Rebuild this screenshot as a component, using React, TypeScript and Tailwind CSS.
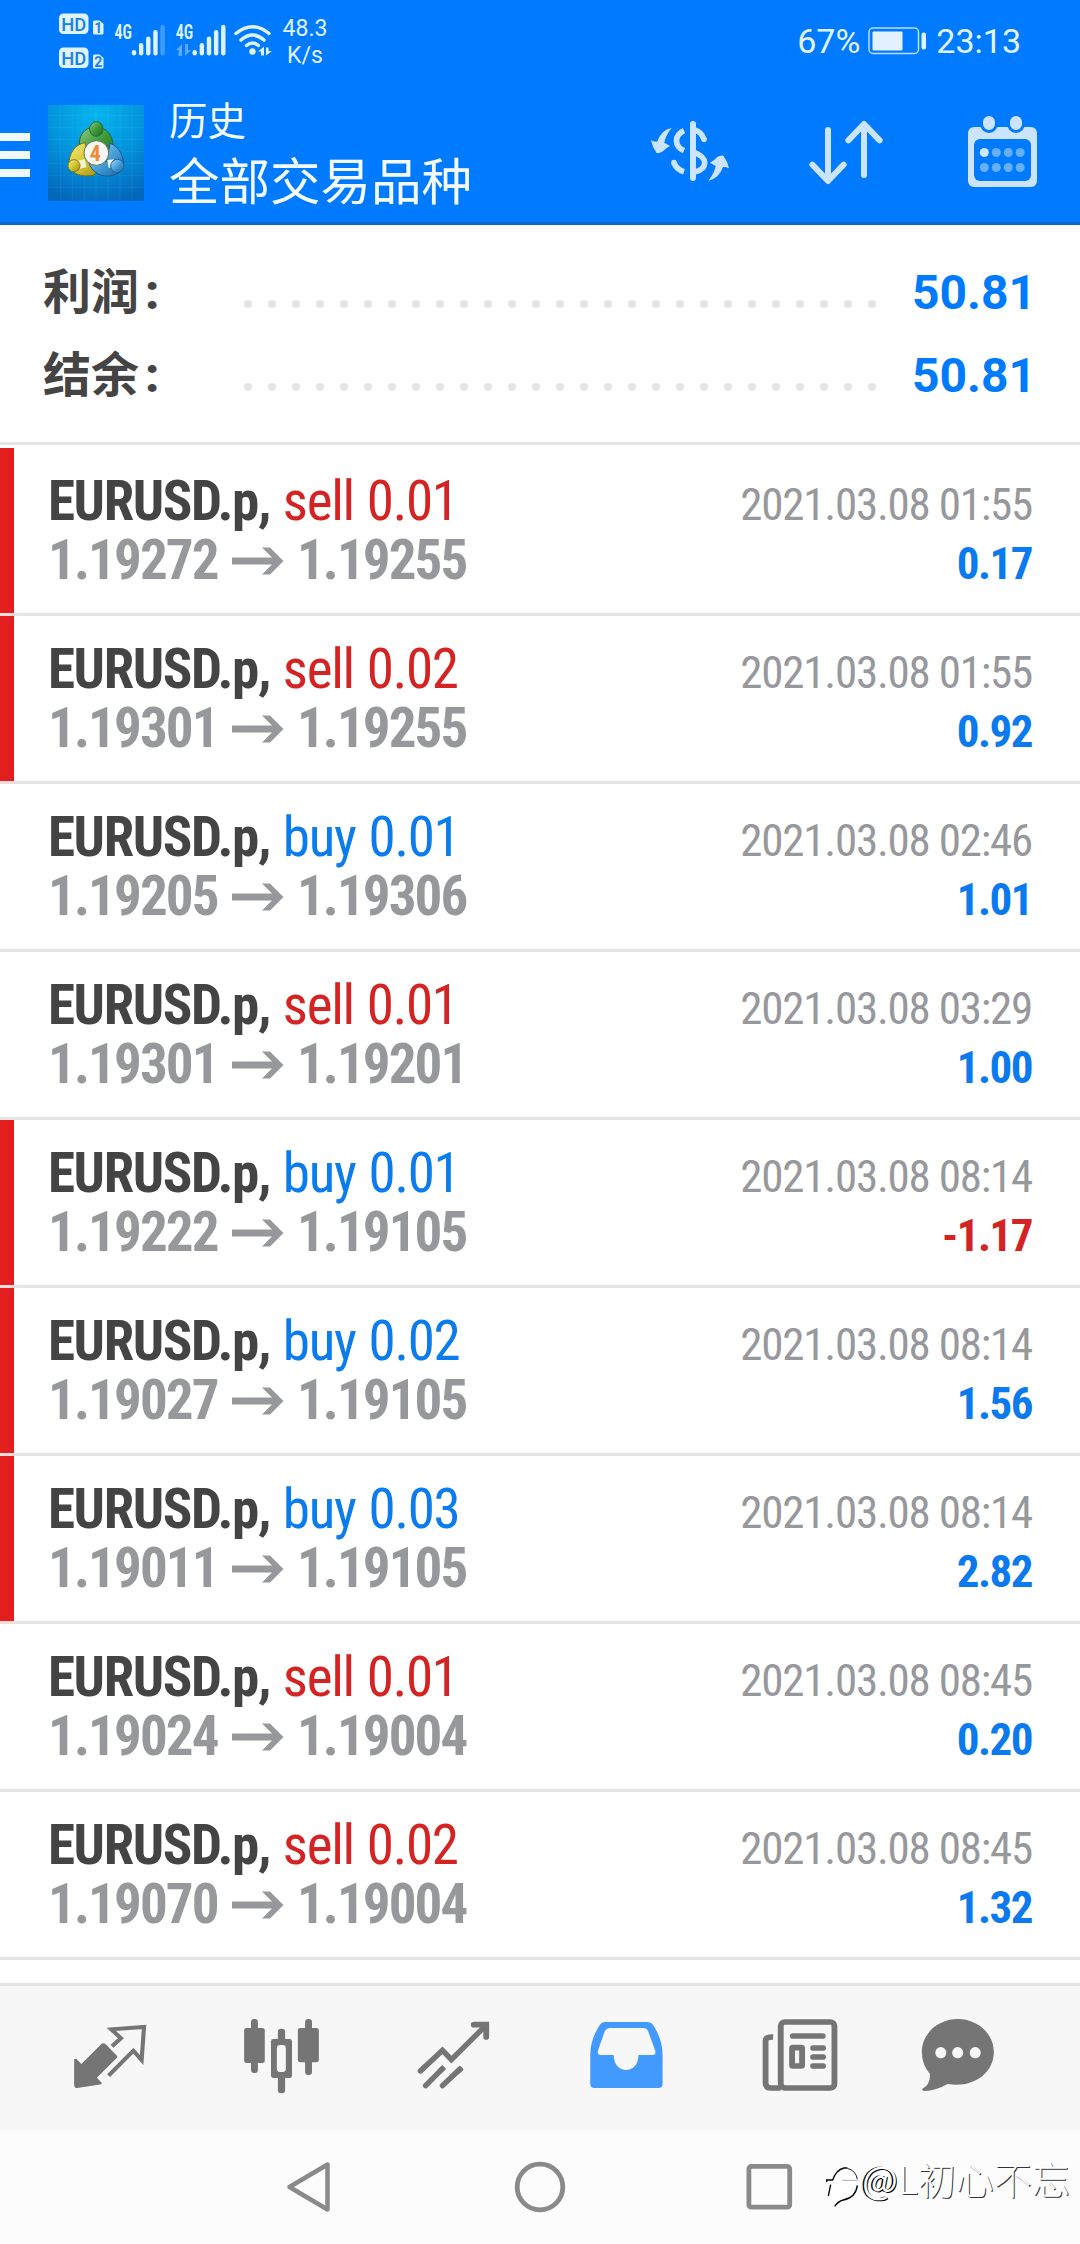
type DealType = {
    side: "buy" | "sell";
    volume: string;
    open: string;
    close: string;
    time: string;
    profit: string;
    marked?: boolean;
}

const deals: Array<DealType> = [
    { side: "sell", volume: "0.01", open: "1.19272", close: "1.19255", time: "2021.03.08 01:55", profit: "0.17", marked: true },
    { side: "sell", volume: "0.02", open: "1.19301", close: "1.19255", time: "2021.03.08 01:55", profit: "0.92", marked: true },
    { side: "buy", volume: "0.01", open: "1.19205", close: "1.19306", time: "2021.03.08 02:46", profit: "1.01" },
    { side: "sell", volume: "0.01", open: "1.19301", close: "1.19201", time: "2021.03.08 03:29", profit: "1.00" },
    { side: "buy", volume: "0.01", open: "1.19222", close: "1.19105", time: "2021.03.08 08:14", profit: "-1.17", marked: true },
    { side: "buy", volume: "0.02", open: "1.19027", close: "1.19105", time: "2021.03.08 08:14", profit: "1.56", marked: true },
    { side: "buy", volume: "0.03", open: "1.19011", close: "1.19105", time: "2021.03.08 08:14", profit: "2.82", marked: true },
    { side: "sell", volume: "0.01", open: "1.19024", close: "1.19004", time: "2021.03.08 08:45", profit: "0.20" },
    { side: "sell", volume: "0.02", open: "1.19070", close: "1.19004", time: "2021.03.08 08:45", profit: "1.32" },
]

export default function App() {
    return (
        <div className="flex flex-col w-[1080px] h-[2244px] overflow-hidden bg-white font-['Roboto','Noto_Sans_CJK_SC',sans-serif]">
            <header className="h-[225px] flex flex-col bg-[#007aff] border-b-[3px] border-[#0a68cf]">
                <StatusBar />
                <TitleBar />
            </header>
            <section className="h-[220px] pt-[26px] border-b-[3px] border-[#e4e4e4]">
                <SummaryRow label="利润" value="50.81" />
                <SummaryRow label="结余" value="50.81" />
            </section>
            <main className="h-[1538px] pt-[3px]">
                {deals.map((x, i) => <DealRow key={i} deal={x} />)}
            </main>
            <TabBar />
            <SystemBar />
        </div>
    )
}


function StatusBar() {
    return (
        <div className="h-[85px] flex items-start text-[#e0f4ff]">
            <svg className="w-[280px] h-[85px] shrink-0" viewBox="0 0 280 85" fill="#dff3ff">
                <HdBadge y={13.5} sim="1" />
                <HdBadge y={47.5} sim="2" />
                <NetworkLabel x={114.5} />
                <SignalBars x={131.8} level={4} />
                <NetworkLabel x={175.8} />
                <SignalBars x={192.5} level={5} />
                <g fill="#57aaff">
                    <path d="M176 50 l6 -6 v12 h-3.500 v-6z" />
                    <path d="M191 50 l-6 6 v-12 h3 v6z" />
                </g>
                <g fill="none" stroke="#dff3ff" strokeWidth="3.500" strokeLinecap="round">
                    <path d="M236 33.500 Q252.500 20 269 33.500" />
                    <path d="M241 40 Q252.500 30 264 40" />
                    <path d="M246.500 45.500 Q252.500 40.500 258.500 45.500" />
                </g>
                <circle cx="252.500" cy="51.500" r="3.200" />
                <path d="M258 51.500 l6 -5 v9 h-3 v-4z" />
                <path d="M272 51 l-6 4.500 v-8 h2.500 v3.500z" />
            </svg>
            <div className="pt-[15px] w-[50px] text-center text-[23px] leading-[27px]">
                <p>48.3</p>
                <p>K/s</p>
            </div>
            <div className="flex-1 flex justify-end items-center pr-[59px] pt-[21px] text-[34px] leading-10">
                <p>67%</p>
                <svg className="w-[60px] h-[28px] ml-[8px] mr-[8px]" viewBox="0 0 60 28">
                    <rect x="1" y="1" width="49.500" height="25.500" rx="4" fill="none" stroke="#b9deff" strokeWidth="1.500" />
                    <rect x="4.500" y="4.500" width="30" height="19" rx="1" fill="#e3f1ff" />
                    <rect x="53.500" y="5.500" width="4.500" height="17" rx="2" fill="#dff3ff" />
                </svg>
                <p>23:13</p>
            </div>
        </div>
    )
}

function HdBadge(props: { y: number, sim: string }) {
    return (
        <g transform={`translate(59 ${props.y})`}>
            <rect width="29.500" height="20.500" rx="4.500" />
            <text x="14.700" y="17" textAnchor="middle" textLength="25" lengthAdjust="spacingAndGlyphs" className="text-[19px] font-medium" fill="#1a80e6">HD</text>
            <path d="M34 8.500 q0 -1.500 1.500 -1.500 h5 l4 3.500 v9 q0 1.500 -1.500 1.500 h-7.500 q-1.500 0 -1.500 -1.500z" />
            <text x="39.300" y="19" textAnchor="middle" className="text-[14px] font-bold" fill="#1a80e6">{props.sim}</text>
        </g>
    )
}

function NetworkLabel(props: { x: number }) {
    return <text x={props.x} y="38.800" textLength="17.500" lengthAdjust="spacingAndGlyphs" className="text-[20px] font-['Roboto_Condensed'] font-semibold">4G</text>
}

function SignalBars(props: { x: number, level: number }) {
    const tops = [50, 43, 36.5, 30, 24.7];
    return (
        <>
            {tops.map((top, i) => (
                <rect key={i} x={props.x + i * 7.15} y={top} width="4.400" height={55.5 - top} rx="2.200" fill={i < props.level ? "#dff3ff" : "#409cff"} />
            ))}
        </>
    )
}


function TitleBar() {
    return (
        <div className="flex-1 flex items-start">
            <div className="w-[30px] mt-[48px] flex flex-col gap-[10px]">
                <div className="h-2 bg-[#f0f9ff]"></div>
                <div className="h-2 bg-[#f0f9ff]"></div>
                <div className="h-2 bg-[#f0f9ff]"></div>
            </div>
            <Logo />
            <div className="ml-[25px] mt-[5px] w-[481px] text-[#f4fbff] font-['Noto_Sans_CJK_SC',sans-serif]">
                <p className="text-[38.5px] leading-[56px]">历史</p>
                <p className="text-[50.5px] leading-[65px]">全部交易品种</p>
            </div>
            {/* deposit / withdrawal filter */}
            <svg className="w-[80px] h-[62px] mt-[35px]" viewBox="30 30 240 186" fill="none" stroke="#cce4ff" strokeWidth="17">
                <rect x="150" y="33" width="18" height="180" rx="9" fill="#cce4ff" stroke="none" />
                <path d="M132 62 C102 76 102 108 132 122" />
                <path d="M102 158 Q108 178 132 185" />
                <path d="M102 158 v0" strokeLinecap="round" />
                <path d="M164 60 Q184 65 192 88" />
                <path d="M192 88 v0" strokeLinecap="round" />
                <path d="M164 128 C204 143 204 176 164 186" />
                <path id="turn" d="M95 54 C78 75 75 90 73 98 L90 108 Q77 114 69 124 Q59 131 50 129 Q37 112 33 91 Q43 96 51 95 Q63 60 95 54Z" fill="#cce4ff" stroke="none" />
                <use href="#turn" transform="rotate(180 150 133)" />
            </svg>
            <svg className="w-[76px] h-[65px] mt-[35px] ml-[78px]" viewBox="504 30 228 195" fill="none" stroke="#cce4ff" strokeWidth="18" strokeLinecap="round" strokeLinejoin="round">
                <path d="M564 60 V212 M517 164 L564 213 L611 164" />
                <path d="M672 195 V43 M625 91 L672 42 L719 91" />
            </svg>
            <svg className="w-[72px] h-[74px] mt-[30px] ml-[83px]" viewBox="967 115 72 74">
                <rect x="968" y="127" width="69" height="60" rx="6" fill="#cce4ff" />
                <rect x="974" y="139" width="57" height="42" rx="6" fill="#007aff" />
                {[989, 1016].map(x => (
                    <rect key={x} x={x - 7.5} y="114.500" width="15" height="17" rx="7.500" fill="#cce4ff" stroke="#007aff" strokeWidth="3" />
                ))}
                {[984.3, 996.3, 1008.3, 1020.2].map((x, i) => (
                    <g key={x} fill="#66b0ff">
                        <circle cx={x} cy="152.500" r="4.500" fill={i == 0 ? "#cce9ff" : "#66b0ff"} />
                        <circle cx={x} cy="167.500" r="4.500" />
                    </g>
                ))}
            </svg>
        </div>
    )
}

function Logo() {
    return (
        <svg className="w-[96px] h-[96px] mt-[20px] ml-[18px]" viewBox="24 15 288 288">
            <defs>
                <radialGradient id="sky" cx="0.5" cy="0.1" r="0.95">
                    <stop offset="0" stopColor="#06b5ee" />
                    <stop offset="0.5" stopColor="#0394dd" />
                    <stop offset="1" stopColor="#0366bb" />
                </radialGradient>
                <linearGradient id="green" x2="1" y2="1">
                    <stop offset="0" stopColor="#8fcc84" />
                    <stop offset="0.5" stopColor="#3f9a3a" />
                    <stop offset="1" stopColor="#176b22" />
                </linearGradient>
                <linearGradient id="yellow" x2="1" y2="1">
                    <stop offset="0" stopColor="#f3ea80" />
                    <stop offset="0.5" stopColor="#d5c530" />
                    <stop offset="1" stopColor="#978714" />
                </linearGradient>
                <linearGradient id="blue" x2="1" y2="1">
                    <stop offset="0" stopColor="#a5d9f7" />
                    <stop offset="0.5" stopColor="#4aa0da" />
                    <stop offset="1" stopColor="#14639f" />
                </linearGradient>
            </defs>
            <rect x="24" y="15" width="288" height="288" fill="url(#sky)" />
            <path d="M62 15V303M98 15V303M133 15V303M168 15V303M204 15V303M240 15V303M276 15V303M24 46H312M24 82H312M24 118H312M24 154H312M24 190H312M24 226H312M24 262H312" stroke="#7fd0ff" strokeOpacity="0.15" strokeWidth="2" />
            <g strokeWidth="3">
                <path d="M118 132 C118 95 145 80 168 80 C200 80 222 112 219 142 C218 165 208 178 190 190 L180 150 Z" fill="url(#green)" stroke="#1d6a35" />
                <path d="M136 128 C105 132 86 160 87 195 C95 225 130 232 160 226 Q180 215 190 198 L140 165 Z" fill="url(#yellow)" stroke="#6b6f20" />
                <path d="M210 130 C240 140 252 170 250 200 C240 228 200 235 175 222 Q152 210 146 185 L200 185 Z" fill="url(#blue)" stroke="#185a92" />
                <path d="M112 182 l22 -4 l6 24 l-20 4z" fill="#f5f3d0" stroke="none" />
                <path d="M202 180 l20 -2 l-4 22 l-12 4z" fill="#eef7ff" stroke="none" />
                <circle cx="102" cy="197" r="18" fill="url(#yellow)" stroke="#8a7d18" />
                <circle cx="232" cy="198" r="20" fill="url(#blue)" stroke="#1b639f" />
                <ellipse cx="169" cy="87" rx="20" ry="22" fill="url(#green)" stroke="#1d6a35" />
            </g>
            <circle cx="169" cy="159" r="37" fill="#f6f6f4" stroke="#5a7a50" strokeWidth="3" />
            <text x="166" y="182" textAnchor="middle" className="text-[66px] font-['Roboto_Condensed'] font-bold" fill="#ee8c3c">4</text>
        </svg>
    )
}


function SummaryRow(props: { label: string, value: string }) {
    return (
        <div className="h-[83px] flex items-center pl-[43px] pr-[44px] text-[48px] leading-[83px] font-bold">
            <p className="w-[201px] text-[#444444]">{props.label}<span className="ml-[6px] font-black">:</span></p>
            <div className="flex gap-4 pt-[22px]">
                {Array.from({ length: 27 }, (_, i) => <div key={i} className="w-2 h-2 rounded-full bg-[#e4e4e4]"></div>)}
            </div>
            <p className="flex-1 text-right text-[#007aff]">{props.value}</p>
        </div>
    )
}


function DealRow(props: { deal: DealType }) {
    const { side, volume, open, close, time, profit, marked } = props.deal;
    const side_color = side == "buy" ? "text-[#0a7cee]" : "text-[#d42323]";
    const profit_color = profit.startsWith("-") ? "text-[#d42323]" : "text-[#0a7aee]";

    return (
        <div className="h-[168px] flex font-['Roboto_Condensed','Roboto',sans-serif]">
            <div className={(marked ? "bg-[#e21e1e] border-[#f8dcdc]" : "border-[#e4e4e4]") + " w-[14px] border-b-[3px]"}></div>
            <div className="flex-1 pt-[24px] pl-[34px] pr-[48px] border-b-[3px] border-[#e4e4e4]">
                <div className="flex items-baseline justify-between h-[59px] leading-[59px]">
                    <p className="text-[55px] tracking-[-0.025em] whitespace-pre">
                        <span className="font-bold text-[#444444]">EURUSD.p,</span>
                        <span className={side_color + " [word-spacing:1.5px] tracking-[-0.023em]"}> {side} {volume}</span>
                    </p>
                    <p className="text-[45px] text-[#97989c] tracking-[-0.027em]">{time}</p>
                </div>
                <div className="flex items-baseline h-[59px] leading-[59px] font-bold">
                    <p className="w-[171px] text-[55px] text-[#97989c] tracking-[-0.034em]">{open}</p>
                    <svg className="w-[52px] h-[28px] ml-[13px] mr-[13px] self-center" viewBox="0 0 52 28" fill="#97989c">
                        <path d="M0 10.500 H40 L30 0.500 H38 L51.500 14 L38 27.500 H30 L40 17.500 H0Z" />
                    </svg>
                    <p className="flex-1 text-[55px] text-[#97989c] tracking-[-0.035em]">{close}</p>
                    <p className={profit_color + " text-[45px] tracking-[-0.034em]"}>{profit}</p>
                </div>
            </div>
        </div>
    )
}


function TabBar() {
    const icon = "w-[80px] h-[80px] shrink-0";
    return (
        <nav className="h-[147px] flex pt-[31px] pl-[70px] gap-[92px] bg-[#f7f7f7] border-t-[3px] border-[#e4e4e4] text-[#757575]">
            {/* quotes */}
            <svg className={icon} viewBox="203 231 232.300 240" preserveAspectRatio="none" fill="currentColor">
                <path d="M215 357 H222 L236 372 L294 312 Q300 307 306 312 L340 348 Q341 352 338 355 L281 413 L295 428 V433 L224 444 Q215 444 215 434Z" />
                <path d="M325 319 L351 295 L323 268 L418 261 L411 360 L387 332 L315 407" fill="none" stroke="currentColor" strokeWidth="12" />
            </svg>
            {/* charts */}
            <svg className={icon} viewBox="702.800 231 232.300 240" preserveAspectRatio="none" fill="currentColor">
                <rect x="729" y="237" width="20" height="162" rx="9" />
                <rect x="709" y="264" width="60" height="105" rx="7" />
                <rect x="886" y="237" width="20" height="168" rx="9" />
                <rect x="865" y="264" width="61" height="103" rx="7" />
                <rect x="807" y="266" width="21" height="194" rx="9" />
                <rect x="787" y="297" width="61" height="117" rx="7" />
                <rect x="804" y="315" width="26" height="81" rx="9" fill="#f7f7f7" />
            </svg>
            {/* trade */}
            <svg className={icon} viewBox="1202.300 231 232.300 240" preserveAspectRatio="none" fill="none" stroke="currentColor" strokeWidth="16" strokeLinecap="round">
                <path d="M1221 393 L1285 331 L1311 359 L1411 256" />
                <path d="M1376 254 H1412 V291" strokeWidth="17" />
                <path d="M1236 437 L1284 387 M1285 437 L1336 387" />
                <path d="M1276 395 L1290 381 M1328 395 L1341 383" strokeLinecap="butt" />
            </svg>
            {/* history */}
            <svg className={icon} viewBox="133.600 231 232.300 240" preserveAspectRatio="none" fill="#429aff" fillRule="evenodd">
                <path d="M187 246 H313 Q322 246 328 254 Q356 298 356 345 V432 Q356 444 344 444 H158 Q146 444 146 432 V345 Q146 298 174 254 Q179 246 187 246Z M205 264 Q194 264 188 274 L168 333 Q166 345 176 345 H214 C214 405 286 405 286 345 H328 Q337 345 335 333 L314 274 Q310 264 299 264Z" />
            </svg>
            {/* news */}
            <svg className={icon} viewBox="633 231 232.300 240" preserveAspectRatio="none" fill="none" stroke="currentColor" strokeWidth="17">
                <rect x="699" y="246" width="156" height="198" rx="12" />
                <path d="M677 291 Q655 290 655 303 V428 Q655 444 671 444 H699" />
                <path d="M734 288 H821 M793 324 H822 M793 351 H822 M793 378 H822" strokeLinecap="round" />
                <rect x="732" y="323" width="29" height="55" rx="2" />
            </svg>
            {/* messages */}
            <svg className={icon + " -ml-[14px]"} viewBox="1092 231 232.300 240" preserveAspectRatio="none" fill="currentColor">
                <path d="M1213 237 C1272 237 1318 282 1318 336 C1318 402 1255 445 1184 432 Q1150 452 1116 453 Q1107 452 1111 446 Q1135 432 1132 401 Q1109 374 1109 336 C1109 282 1155 237 1213 237Z" />
                <ellipse cx="1164" cy="338" rx="16" ry="17" fill="#f7f7f7" />
                <ellipse cx="1213" cy="338" rx="16" ry="17" fill="#f7f7f7" />
                <ellipse cx="1264" cy="338" rx="16" ry="17" fill="#f7f7f7" />
            </svg>
        </nav>
    )
}


function SystemBar() {
    return (
        <div className="relative h-[114px] flex pt-[31px] pl-[285px] bg-[#fcfcfc]">
            <svg className="w-[46px] h-[52px]" viewBox="0 0 46 52" fill="none" stroke="#8a8a8a" strokeWidth="4.500" strokeLinejoin="round">
                <path d="M42.500 3.500 V48.500 L4.500 26Z" />
            </svg>
            <svg className="w-[52px] h-[52px] ml-[183px]" viewBox="0 0 52 52" fill="none" stroke="#8a8a8a" strokeWidth="4.800">
                <circle cx="26" cy="26" r="22.800" />
            </svg>
            <svg className="w-[48px] h-[52px] ml-[179px]" viewBox="0 0 48 52" fill="none" stroke="#8a8a8a" strokeWidth="4.800">
                <rect x="3.900" y="5.400" width="40.800" height="40.800" rx="2.500" />
            </svg>
            <div className="absolute left-[824px] top-[21px] flex text-white font-['Noto_Sans_CJK_SC',sans-serif] text-[38px] leading-[54px]">
                <svg className="w-[38px] h-[50px] mt-[12px]" viewBox="42 25 114 150" fill="none">
                    <path d="M74 155 Q84 140 100 136 Q143 125 143 84 Q130 38 96 40 Q74 50 64 74 L58 124Z" fill="#ffffff" />
                    <path d="M74 155 Q84 140 100 136 Q138 128 142 92" stroke="#000000" strokeWidth="4" />
                    <path d="M50 82 V76 H68 Q78 46 102 40 H112 M62 90 L55 124" stroke="#000000" strokeWidth="4" />
                    <path d="M96 77 H142" stroke="#888888" strokeWidth="2" />
                    <path d="M112 41 Q138 48 142 74" stroke="#222222" strokeWidth="3" />
                </svg>
                <span className="[text-shadow:1px_1px_0_#000,-1.5px_-0.5px_0_#000]">@</span>
                <span className="font-light [text-shadow:1px_1px_0_#333]">L初心不忘</span>
            </div>
        </div>
    )
}
